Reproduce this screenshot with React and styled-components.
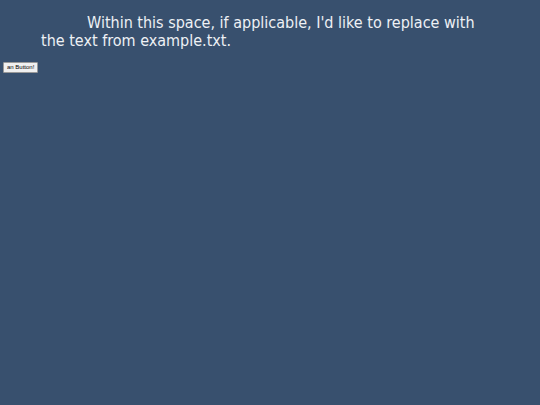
import React from "react";
import styled, { createGlobalStyle } from "styled-components";

const Global = createGlobalStyle`
  html, body { margin: 0; padding: 0; background: #38506e; }
  body { min-height: 405px; }
`;

const Page = styled.div`
  padding: 8px 3px;
  font-family: "DejaVu Sans Condensed", "DejaVu Sans", Verdana, sans-serif;
`;

const Message = styled.p`
  margin: 6px 38px 0 38px;
  color: #eef1f5;
  font-size: 16px;
  font-stretch: condensed;
  line-height: 17.5px;
  text-indent: 46px;
`;

const SmallButton = styled.button`
  margin-top: 13px;
  display: block;
  font-family: "Liberation Sans", Arial, sans-serif;
  font-size: 6px;
  padding: 1px 3px;
  background: #f0f0f0;
  color: #000;
  border: 1px solid #999;
  border-radius: 1px;
  line-height: 7px;
`;

export default function App() {
  return (
    <>
      <Global />
      <Page>
        <Message>
          Within this space, if applicable, I'd like to replace with the text from example.txt.
        </Message>
        <SmallButton>an Button!</SmallButton>
      </Page>
    </>
  );
}
